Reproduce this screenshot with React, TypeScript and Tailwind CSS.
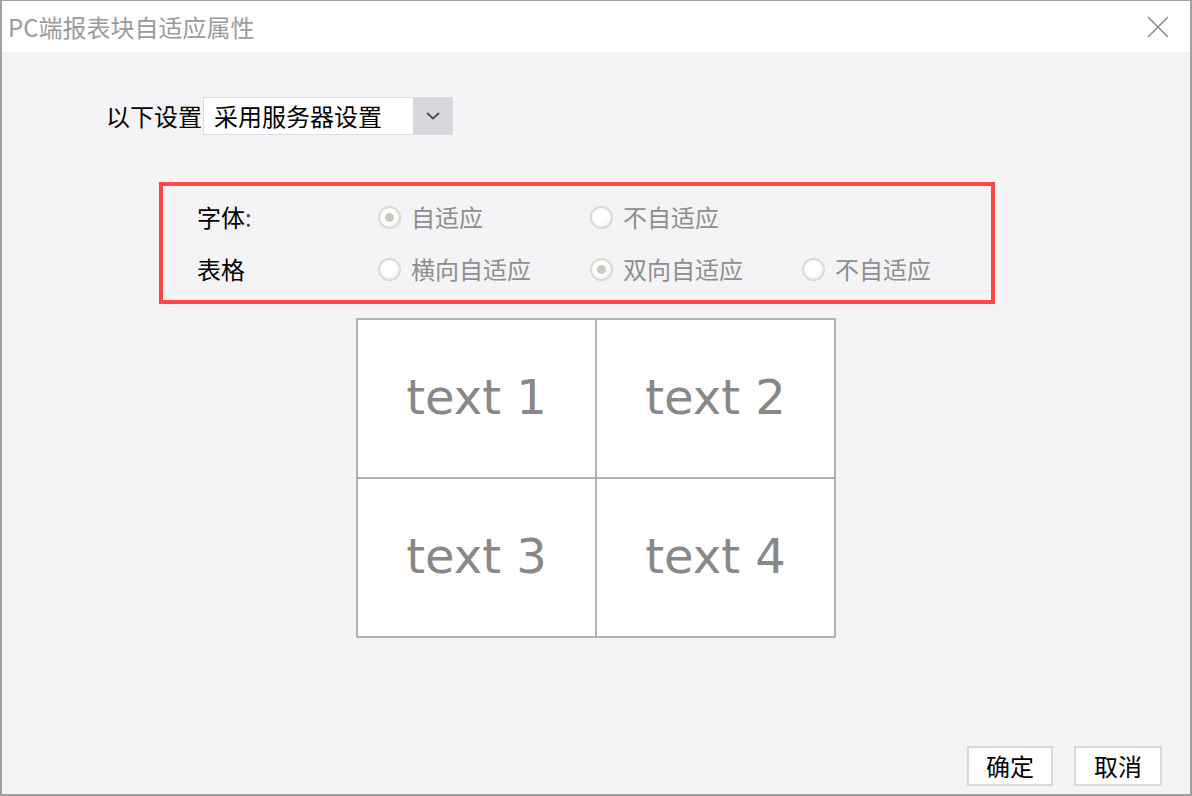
import React from "react";

const cjk = "font-['Noto_Sans_CJK_SC',sans-serif]";

function Radio({ checked, label }: { checked?: boolean; label: string }) {
  return (
    <div className="flex items-center gap-[10px]">
      <div className="w-[23px] h-[23px] shrink-0 rounded-full border-[2px] border-[#dcd9d2] bg-[radial-gradient(circle_at_40%_40%,#ffffff_40%,#ecebe8_100%)] flex items-center justify-center">
        {checked && <div className="w-[9px] h-[9px] rounded-full bg-[#cdc9c1]" />}
      </div>
      <span className="text-[24px] leading-none text-[#8e8e8e] whitespace-nowrap">{label}</span>
    </div>
  );
}

export default function App() {
  return (
    <div
      className={`w-[1192px] h-[796px] flex flex-col border-t border-l-2 border-r-2 border-b-2 border-[#a0a0a0] ${cjk} overflow-hidden`}
    >
      {/* Title bar */}
      <div className="h-[51px] bg-white flex items-center justify-between pl-[6px] pr-[21px] shrink-0">
        <span className="text-[24px] leading-none text-[#9b9b9b]">PC端报表块自适应属性</span>
        <svg width="22" height="22" viewBox="0 0 22 22" className="block">
          <path d="M1 1 L21 21 M21 1 L1 21" stroke="#8c8c8c" strokeWidth="1.6" fill="none" />
        </svg>
      </div>

      {/* Body */}
      <div className="flex-1 bg-[#f4f4f6] flex flex-col pt-[45px] pb-[8px] pr-[28px]">
        {/* Setting row */}
        <div className="flex items-center pl-[104px]">
          <span className="text-[24px] leading-none text-black">以下设置</span>
          <div className="ml-[1px] flex h-[38px] w-[250px] border border-[#dcdce0] bg-white">
            <div className="flex-1 flex items-center pl-[10px] text-[24px] leading-none text-black">
              采用服务器设置
            </div>
            <div className="w-[39px] bg-[#d8d8dc] flex items-center justify-center">
              <svg width="14" height="8" viewBox="0 0 14 8">
                <path d="M1 1 L7 6.5 L13 1" stroke="#4a4a4a" strokeWidth="1.8" fill="none" />
              </svg>
            </div>
          </div>
        </div>

        {/* Red box */}
        <div className="ml-[157px] mt-[47px] w-[836px] h-[122px] border-4 border-[#ff4646] pt-[5px] pl-[34px] flex flex-col">
          <div className="h-[52px] flex items-center">
            <span className="w-[181px] shrink-0 text-[24px] leading-none text-black">
              字体<span className="text-[#5a3a5a]">:</span>
            </span>
            <div className="w-[212px] shrink-0">
              <Radio checked label="自适应" />
            </div>
            <div className="w-[212px] shrink-0">
              <Radio label="不自适应" />
            </div>
          </div>
          <div className="h-[52px] flex items-center">
            <span className="w-[181px] shrink-0 text-[24px] leading-none text-black">表格</span>
            <div className="w-[212px] shrink-0">
              <Radio label="横向自适应" />
            </div>
            <div className="w-[212px] shrink-0">
              <Radio checked label="双向自适应" />
            </div>
            <div className="shrink-0">
              <Radio label="不自适应" />
            </div>
          </div>
        </div>

        {/* Preview table */}
        <div className="ml-[354px] mt-[14px] w-[480px] h-[320px] bg-[#b2b2b2] p-[2px] grid grid-cols-2 grid-rows-2 gap-[2px]">
          {["text 1", "text 2", "text 3", "text 4"].map((t) => (
            <div
              key={t}
              className="bg-white flex items-center justify-center pb-[4px] font-['DejaVu_Sans',sans-serif] text-[48px] leading-none text-[#888888]"
            >
              {t}
            </div>
          ))}
        </div>

        <div className="flex-1" />

        {/* Buttons */}
        <div className="flex justify-end gap-[21px]">
          <button className="w-[86px] h-[40px] bg-white border-2 border-[#dadada] text-[24px] leading-none text-black">
            确定
          </button>
          <button className="w-[88px] h-[40px] bg-white border-2 border-[#dadada] text-[24px] leading-none text-black">
            取消
          </button>
        </div>
      </div>
    </div>
  );
}
